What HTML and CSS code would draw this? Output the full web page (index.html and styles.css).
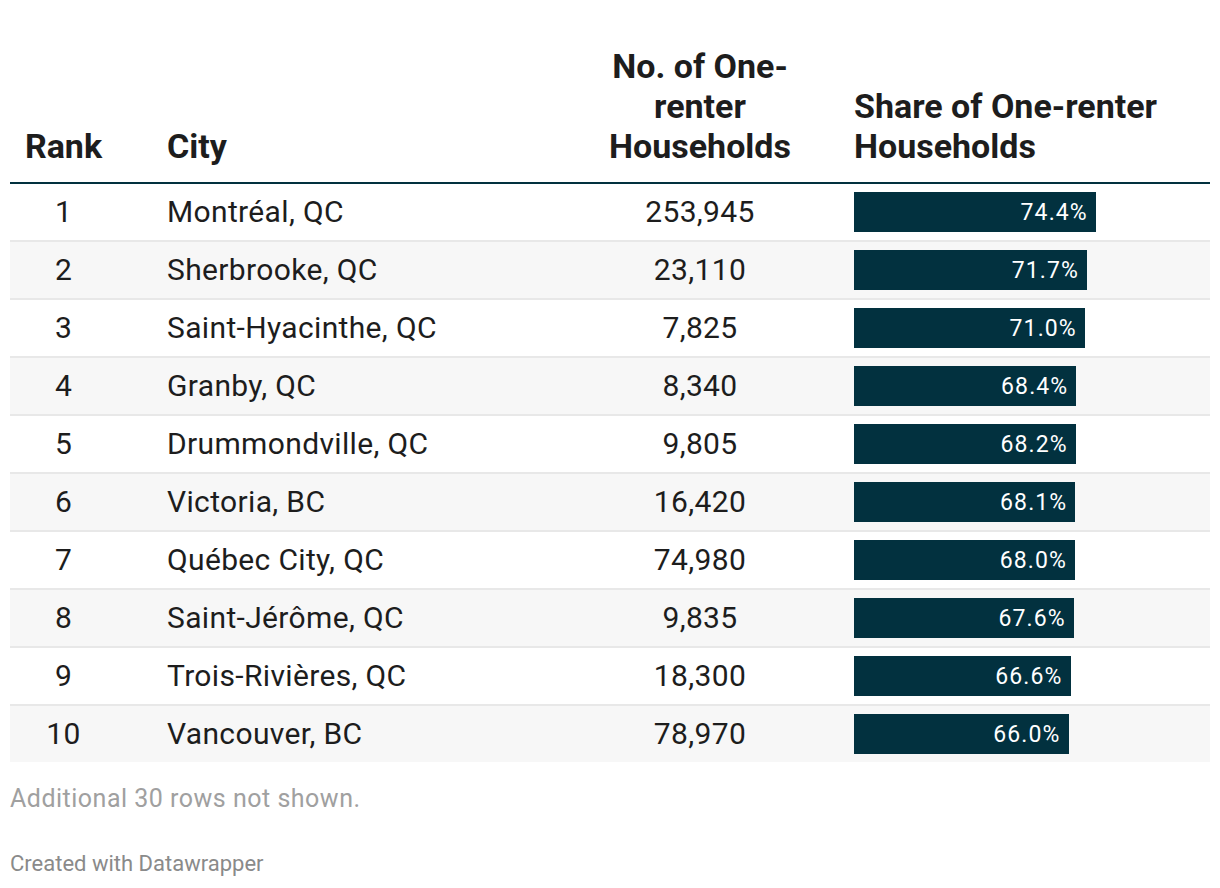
FILE: index.html
```html
<!DOCTYPE html>
<html lang="en">
<head>
<meta charset="utf-8">
<title>One-renter Households</title>
<link rel="stylesheet" href="styles.css">
</head>
<body>
<div class="chart">
  <table class="dw-table">
    <colgroup>
      <col class="c-rank">
      <col class="c-city">
      <col class="c-num">
      <col class="c-share">
    </colgroup>
    <thead>
      <tr>
        <th class="rank">Rank</th>
        <th class="city">City</th>
        <th class="num">No. of One-renter Households</th>
        <th class="share">Share of One-renter Households</th>
      </tr>
    </thead>
    <tbody>
      <tr><td class="rank">1</td><td class="city">Montréal, QC</td><td class="num">253,945</td><td class="share"><div class="bar" style="width:241.8px"><span>74.4%</span></div></td></tr>
      <tr><td class="rank">2</td><td class="city">Sherbrooke, QC</td><td class="num">23,110</td><td class="share"><div class="bar" style="width:233px"><span>71.7%</span></div></td></tr>
      <tr><td class="rank">3</td><td class="city">Saint-Hyacinthe, QC</td><td class="num">7,825</td><td class="share"><div class="bar" style="width:230.8px"><span>71.0%</span></div></td></tr>
      <tr><td class="rank">4</td><td class="city">Granby, QC</td><td class="num">8,340</td><td class="share"><div class="bar" style="width:222.3px"><span>68.4%</span></div></td></tr>
      <tr><td class="rank">5</td><td class="city">Drummondville, QC</td><td class="num">9,805</td><td class="share"><div class="bar" style="width:221.7px"><span>68.2%</span></div></td></tr>
      <tr><td class="rank">6</td><td class="city">Victoria, BC</td><td class="num">16,420</td><td class="share"><div class="bar" style="width:221.3px"><span>68.1%</span></div></td></tr>
      <tr><td class="rank">7</td><td class="city">Québec City, QC</td><td class="num">74,980</td><td class="share"><div class="bar" style="width:221px"><span>68.0%</span></div></td></tr>
      <tr><td class="rank">8</td><td class="city">Saint-Jérôme, QC</td><td class="num">9,835</td><td class="share"><div class="bar" style="width:219.7px"><span>67.6%</span></div></td></tr>
      <tr><td class="rank">9</td><td class="city">Trois-Rivières, QC</td><td class="num">18,300</td><td class="share"><div class="bar" style="width:216.5px"><span>66.6%</span></div></td></tr>
      <tr><td class="rank">10</td><td class="city">Vancouver, BC</td><td class="num">78,970</td><td class="share"><div class="bar" style="width:214.5px"><span>66.0%</span></div></td></tr>
    </tbody>
  </table>
  <p class="note">Additional 30 rows not shown.</p>
  <p class="credit">Created with Datawrapper</p>
</div>
</body>
</html>
```
FILE: styles.css
```css
html, body {
  margin: 0;
  padding: 0;
  background: #ffffff;
}

body {
  font-family: Roboto, "Liberation Sans", Arial, sans-serif;
  color: #1d1d1d;
}

.chart {
  padding: 10px;
}

.dw-table {
  width: 1200px;
  border-collapse: collapse;
  table-layout: fixed;
  margin-top: 36px;
}

.c-rank { width: 107px; }
.c-city { width: 483px; }
.c-num { width: 200px; }
.c-share { width: 410px; }

.dw-table th {
  font-size: 34px;
  font-weight: 700;
  line-height: 40px;
  vertical-align: bottom;
  padding: 0 0 16px 0;
  border-bottom: 2px solid #02313f;
  color: #1d1d1d;
}

.dw-table td {
  font-size: 30px;
  letter-spacing: 0.35px;
  height: 56px;
  padding: 0;
  vertical-align: middle;
  line-height: 34px;
}

.dw-table tbody tr + tr td {
  border-top: 2px solid #e8e8e8;
}

.dw-table tbody tr:nth-child(even) td {
  background: #f7f7f7;
}

.rank { text-align: center; }

.city { text-align: left; }
.dw-table .city { padding-left: 50px; }

.num { text-align: center; }

.share { text-align: left; }
.dw-table .share { padding-left: 54px; }
.dw-table th.share { padding-right: 40px; }

.bar {
  height: 40px;
  background: #02313f;
  display: flex;
  align-items: center;
  justify-content: flex-end;
  box-sizing: border-box;
  padding-right: 8px;
}

.bar span {
  color: #ffffff;
  font-family: Roboto, "Liberation Sans", sans-serif;
  font-size: 23px;
  letter-spacing: 1.1px;
  line-height: 1;
}

.note {
  margin: 21px 0 0 0;
  font-size: 25px;
  letter-spacing: 0.5px;
  color: #a0a0a0;
  line-height: 32px;
}

.credit {
  margin: 35px 0 0 0;
  font-size: 22px;
  color: #8a8a8a;
  line-height: 28px;
}
```
